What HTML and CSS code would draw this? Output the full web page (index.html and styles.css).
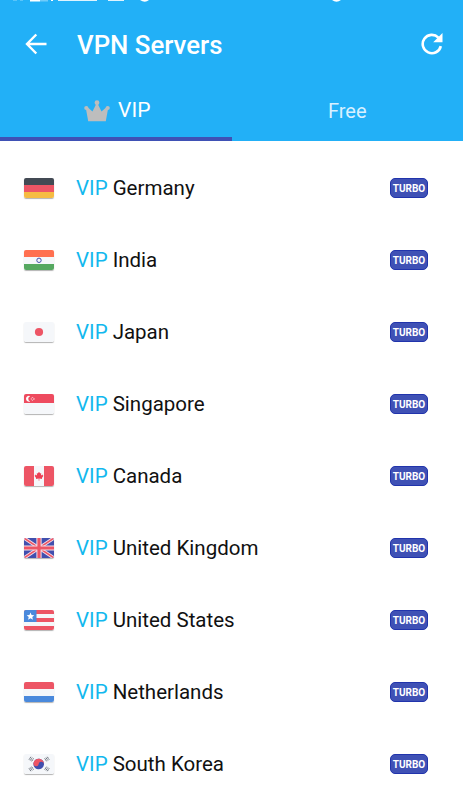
FILE: index.html
```html
<!DOCTYPE html>
<html lang="en">
<head>
    <meta charset="UTF-8">
    <meta name="viewport" content="width=device-width, initial-scale=1.0">
    <title>VPN Servers</title>
    <link rel="stylesheet" href="styles.css">
</head>
<body>
    <header class="header">
        <!-- status bar, scrolled mostly out of view -->
        <svg class="status" width="463" height="3" viewBox="0 0 463 3">
            <path fill="#fff" opacity=".25" d="M13 0h4v1h-4zM20 0h3v1h-3z"/>
            <path fill="#fff" d="M30 0h10v1.500h-10zM51 0h2v1h-2z"/>
            <path fill="#fff" opacity=".35" d="M40 0h8v1.500h-8z"/>
            <path fill="#fff" opacity=".85" d="M58 0h39v1h-39zM108 0h16v1h-16z"/>
            <path fill="#fff" d="M140 0h9q-4 3.500-9 0zM332 0h9q-4.500 3.500-9 0z"/>
        </svg>
        <div class="toolbar">
            <svg class="back" width="22" height="22" viewBox="0 0 22 22">
                <path d="M21.500 11H2.500M11.300 1.500L2 11l9.300 9.500" fill="none" stroke="#fff" stroke-width="2.400"/>
            </svg>
            <h1>VPN Servers</h1>
            <svg class="refresh" width="22" height="22" viewBox="0 0 22 22">
                <path d="M17.400 4.600A9.150 9.150 0 1 0 19.800 13.100" fill="none" stroke="#fff" stroke-width="2.600"/>
                <path d="M21.500 0v9.300h-9.300z" fill="#fff"/>
            </svg>
        </div>
        <nav class="tabs">
            <div class="tab active">
                <svg class="crown" width="26" height="22" viewBox="0 0 26 22">
                    <g fill="#bdbdbd">
                        <path d="M4.200 21.300L1.900 8.500l2-1 4.600 4L12.200 4h1.600l3.700 7.500 4.600-4 2 1-2.300 12.800z"/>
                        <circle cx="13" cy="2.700" r="2.400"/>
                        <circle cx="2.300" cy="8" r="2.100"/>
                        <circle cx="23.700" cy="8" r="2.100"/>
                    </g>
                </svg>
                <span>VIP</span>
            </div>
            <div class="tab free"><span>Free</span></div>
        </nav>
    </header>

    <ul class="servers">
        <li class="server">
            <svg class="flag" viewBox="0 0 30 20">
                <path fill="#434a54" d="M0 0h30v7H0z"/>
                <path fill="#ed5565" d="M0 7h30v7H0z"/>
                <path fill="#f6bb42" d="M0 14h30v6H0z"/>
            </svg>
            <span class="name"><b>VIP</b> Germany</span>
            <span class="turbo">TURBO</span>
        </li>
        <li class="server">
            <svg class="flag" viewBox="0 0 30 20">
                <path fill="#f5f7fa" d="M0 0h30v20H0z"/>
                <path fill="#ff7050" d="M0 0h30v7H0z"/>
                <path fill="#55a860" d="M0 14h30v6H0z"/>
                <circle cx="15" cy="10.300" r="2.200" fill="none" stroke="#4350ae"/>
            </svg>
            <span class="name"><b>VIP</b> India</span>
            <span class="turbo">TURBO</span>
        </li>
        <li class="server">
            <svg class="flag" viewBox="0 0 30 20">
                <path fill="#f5f7fa" d="M0 0h30v20H0z"/>
                <circle cx="15" cy="10" r="4.100" fill="#ed5565"/>
            </svg>
            <span class="name"><b>VIP</b> Japan</span>
            <span class="turbo">TURBO</span>
        </li>
        <li class="server">
            <svg class="flag" viewBox="0 0 30 20">
                <path fill="#f5f7fa" d="M0 0h30v20H0z"/>
                <path fill="#ee4b5f" d="M0 0h30v9H0z"/>
                <path fill="#fff" d="M6.200 2.200a2.900 2.900 0 1 0 0 5.200 2.700 2.700 0 0 1 0-5.200z"/>
                <circle cx="8.600" cy="4.900" r="1.400" fill="none" stroke="#fff" stroke-width=".9" stroke-dasharray="1 .7"/>
            </svg>
            <span class="name"><b>VIP</b> Singapore</span>
            <span class="turbo">TURBO</span>
        </li>
        <li class="server">
            <svg class="flag" viewBox="0 0 30 20">
                <path fill="#f5f7fa" d="M0 0h30v20H0z"/>
                <path fill="#ed5565" d="M0 0h10v20H0zM20 0h10v20H20z"/>
                <path fill="#ed4055" d="M15 5.700l1.200 1.800 1-.4-.2 2.400 1.500-1 .4 1 .6.200-1.600 2.300.2.900-2.800-.3v2.100h-.6v-2.100l-2.800.3.200-.9-1.600-2.300.6-.2.400-1 1.500 1-.2-2.400 1 .4z"/>
            </svg>
            <span class="name"><b>VIP</b> Canada</span>
            <span class="turbo">TURBO</span>
        </li>
        <li class="server">
            <svg class="flag" viewBox="0 0 30 20">
                <path fill="#414fae" d="M0 0h30v20H0z"/>
                <path stroke="#f5dfe8" stroke-width="3.400" d="M0 0l30 20M30 0L0 20"/>
                <path stroke="#ed5565" stroke-width="1.500" d="M0 0l30 20M30 0L0 20"/>
                <path stroke="#f5dfe8" stroke-width="5.200" d="M15 0v20M0 10h30"/>
                <path stroke="#ed5565" stroke-width="3.200" d="M15 0v20M0 10h30"/>
            </svg>
            <span class="name"><b>VIP</b> United Kingdom</span>
            <span class="turbo">TURBO</span>
        </li>
        <li class="server">
            <svg class="flag" viewBox="0 0 30 20">
                <path fill="#f5f7fa" d="M0 0h30v20H0z"/>
                <path fill="#ed5565" d="M0 0h30v4H0zM0 8h30v4H0zM0 16h30v4H0z"/>
                <path fill="#4a89dc" d="M0 0h12.500v12H0z"/>
                <path fill="#fff" d="M6.500 2.500l1.100 2.400 2.700.3-2 1.800.6 2.700-2.400-1.400-2.400 1.400.6-2.700-2-1.800 2.700-.3z"/>
            </svg>
            <span class="name"><b>VIP</b> United States</span>
            <span class="turbo">TURBO</span>
        </li>
        <li class="server">
            <svg class="flag" viewBox="0 0 30 20">
                <path fill="#f5f7fa" d="M0 0h30v20H0z"/>
                <path fill="#ed5565" d="M0 0h30v7H0z"/>
                <path fill="#4a89dc" d="M0 14h30v6H0z"/>
            </svg>
            <span class="name"><b>VIP</b> Netherlands</span>
            <span class="turbo">TURBO</span>
        </li>
        <li class="server">
            <svg class="flag" viewBox="0 0 30 20">
                <path fill="#f5f7fa" d="M0 0h30v20H0z"/>
                <g transform="rotate(8 14.700 10)">
                    <circle cx="14.700" cy="10" r="5.300" fill="#414fae"/>
                    <path fill="#ed5565" d="M9.400 10a5.300 5.300 0 0 1 10.600 0 2.650 2.650 0 0 0-5.300 0 2.650 2.650 0 0 1-5.300 0z"/>
                </g>
                <path stroke="#555b66" stroke-width=".9" stroke-dasharray="1.700 .4" d="M5 5.700l1.900-2.900M6.300 6.500l1.900-2.900M7.600 7.300l1.900-2.900M20.700 4.400l1.900 2.900M22 3.600l1.900 2.900M23.300 2.800l1.900 2.900M5 14.300l1.900 2.900M6.300 13.500l1.900 2.900M7.600 12.700l1.900 2.900M20.700 15.600l1.900-2.900M22 16.400l1.900-2.900M23.300 17.200l1.900-2.900"/>
            </svg>
            <span class="name"><b>VIP</b> South Korea</span>
            <span class="turbo">TURBO</span>
        </li>
    </ul>
</body>
</html>
```
FILE: styles.css
```css
* {
    box-sizing: border-box;
}
body {
    margin: 0;
    height: 800px;
    overflow: hidden;
    background-color: #fff;
    font-family: Roboto, sans-serif;
}
.header {
    height: 141px;
    background-color: #22b0f7;
    color: #fff;
}
.status {
    display: block;
}
.toolbar {
    display: flex;
    align-items: center;
    height: 82px;
    padding: 0 20px 0 25px;
}
h1 {
    flex: 1;
    margin: 0 0 0 30px;
    padding-top: 2px;
    font-size: 25.800px;
    font-weight: 500;
    line-height: 30px;
}
.tabs {
    display: flex;
    height: 56px;
}
.tab {
    display: flex;
    width: 50%;
    align-items: center;
    justify-content: center;
    font-size: 21px;
}
.active {
    gap: 8px;
    padding: 0 0 1px 3px;
    border-bottom: 4px solid #3f51b5;
}
.active span {
    padding-bottom: 2px;
}
.free {
    padding-bottom: 5px;
    color: #d8f1ff;
    font-size: 20px;
}
.servers {
    margin: 0;
    padding: 11px 0 0;
    list-style: none;
}
.server {
    display: flex;
    align-items: center;
    height: 72px;
    padding: 0 35px 0 23.500px;
}
.flag {
    width: 30px;
    height: 20px;
    border-radius: 2px;
    box-shadow: 0 1px 1px rgba(0, 0, 0, .3);
}
.name {
    flex: 1;
    margin-left: 22.500px;
    color: #111;
    font-size: 20.500px;
}
.name b {
    color: #12b8ee;
    font-weight: 400;
}
.turbo {
    width: 38px;
    height: 20px;
    border: 1px solid #2134ac;
    border-radius: 5px;
    background-color: #3f51b5;
    color: #fff;
    font-size: 10px;
    font-weight: 700;
    line-height: 19px;
    text-align: center;
}
```
